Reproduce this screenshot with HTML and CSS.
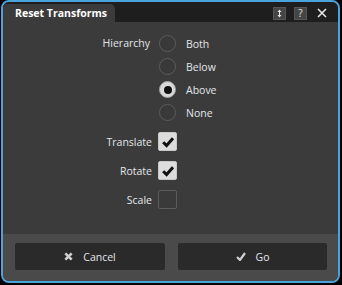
FILE: index.html
```html
<!DOCTYPE html>
<html lang="en">
<head>
    <meta charset="UTF-8">
    <title>Reset Transforms</title>
    <link rel="stylesheet" href="styles.css">
</head>
<body>
    <div class="window">
        <div class="titlebar">
            <div class="tab">Reset Transforms</div>
            <div class="tools">
                <span class="tool-box">
                    <svg width="11" height="11" viewBox="0 0 11 11"><path d="M5.5 1.5 L3.5 4 H7.5 Z M5.5 9.5 L3.5 7 H7.5 Z" fill="#e6e6e6"/><rect x="5" y="3.5" width="1" height="4" fill="#e6e6e6"/></svg>
                </span>
                <span class="tool-box">?</span>
                <span class="tool-close">
                    <svg width="10" height="10" viewBox="0 0 10 10"><path d="M1 1 L9 9 M9 1 L1 9" stroke="#e6e6e6" stroke-width="1.6"/></svg>
                </span>
            </div>
        </div>

        <div class="content">
            <div class="row row-group">
                <div class="label">Hierarchy</div>
                <div class="radios">
                    <div class="radio-item"><span class="radio"></span>Both</div>
                    <div class="radio-item"><span class="radio"></span>Below</div>
                    <div class="radio-item"><span class="radio checked"></span>Above</div>
                    <div class="radio-item"><span class="radio"></span>None</div>
                </div>
            </div>
            <div class="row row-check">
                <div class="label">Translate</div>
                <span class="checkbox checked">
                    <svg width="14" height="12" viewBox="0 0 14 12"><path d="M2.2 6.2 L5.6 9.6 L12 2.2" fill="none" stroke="#111" stroke-width="3"/></svg>
                </span>
            </div>
            <div class="row row-check">
                <div class="label">Rotate</div>
                <span class="checkbox checked">
                    <svg width="14" height="12" viewBox="0 0 14 12"><path d="M2.2 6.2 L5.6 9.6 L12 2.2" fill="none" stroke="#111" stroke-width="3"/></svg>
                </span>
            </div>
            <div class="row row-check">
                <div class="label">Scale</div>
                <span class="checkbox"></span>
            </div>
        </div>

        <div class="footer">
            <button class="btn">
                <svg width="9" height="9" viewBox="0 0 9 9"><path d="M1.3 1.3 L7.7 7.7 M7.7 1.3 L1.3 7.7" stroke="#cfcfcf" stroke-width="2.6"/></svg>
                Cancel
            </button>
            <button class="btn">
                <svg width="10" height="9" viewBox="0 0 10 9"><path d="M1 5 L4 8 L9 1" fill="none" stroke="#cfcfcf" stroke-width="2.2"/></svg>
                Go
            </button>
        </div>
    </div>
</body>
</html>
```

FILE: styles.css
```css
html, body {
    margin: 0;
    background: #000;
    font-family: 'Open Sans', sans-serif;
    font-size: 10.5px;
    color: #e2e6ea;
}
.window {
    width: 339px;
    height: 283px;
    margin-left: 1px;
    box-sizing: border-box;
    border: 2px solid #4aa3dc;
    border-radius: 8px;
    background: #3b3b3b;
    display: flex;
    flex-direction: column;
    overflow: hidden;
}
.titlebar {
    height: 20px;
    padding-top: 2px;
    background: #1e1e1e;
    display: flex;
    align-items: stretch;
    box-sizing: border-box;
}
.tab {
    width: 112px;
    padding-left: 12px;
    box-sizing: border-box;
    background: #3b3b3b;
    border-top-right-radius: 5px;
    font-weight: 700;
    font-size: 10.5px;
    color: #fff;
    display: flex;
    align-items: center;
}
.tools {
    margin-left: auto;
    display: flex;
    align-items: center;
    gap: 8px;
    padding-right: 11px;
}
.tool-box {
    width: 11px;
    height: 11px;
    background: #444;
    border: 1px solid #555;
    display: flex;
    align-items: center;
    justify-content: center;
    font-size: 10px;
    line-height: 1;
    color: #e6e6e6;
}
.tool-close {
    display: flex;
    padding-left: 2px;
}
.content {
    flex: 1;
    padding-top: 10px;
}
.row {
    display: grid;
    grid-template-columns: 147px auto;
    column-gap: 9px;
}
.label {
    text-align: right;
}
.row-group .label {
    line-height: 23px;
}
.radios {
    display: flex;
    flex-direction: column;
    margin-bottom: 3px;
}
.radio-item {
    height: 23px;
    display: flex;
    align-items: center;
    gap: 10px;
}
.radio {
    width: 17px;
    height: 17px;
    box-sizing: border-box;
    border: 1px solid #5c5c5c;
    border-radius: 50%;
    background: #393939;
    display: flex;
    align-items: center;
    justify-content: center;
}
.radio.checked {
    background: #d9d9d9;
    border-color: #a0a0a0;
}
.radio.checked::after {
    content: "";
    width: 8px;
    height: 8px;
    border-radius: 50%;
    background: #111;
}
.row-check {
    height: 29px;
    align-items: center;
}
.row-check .label {
    margin-right: -2px;
}
.checkbox {
    width: 19px;
    height: 19px;
    margin-left: -1px;
    box-sizing: border-box;
    border: 1px solid #5c5c5c;
    border-radius: 2px;
    background: #3a3a3a;
    display: flex;
    align-items: center;
    justify-content: center;
}
.checkbox.checked {
    background: #dcdcdc;
    border-color: #c8c8c8;
}
.footer {
    height: 47px;
    background: #4a4a4a;
    box-sizing: border-box;
    padding: 9px 10px 0 12px;
    display: grid;
    grid-template-columns: 150px 149px;
    column-gap: 13px;
    align-items: start;
}
.btn {
    height: 27px;
    background: #2a2a2a;
    border: none;
    border-radius: 2px;
    color: #e2e6ea;
    font-family: 'Open Sans', sans-serif;
    font-size: 10.5px;
    display: flex;
    align-items: center;
    justify-content: center;
    gap: 10px;
    padding: 0;
}
```
